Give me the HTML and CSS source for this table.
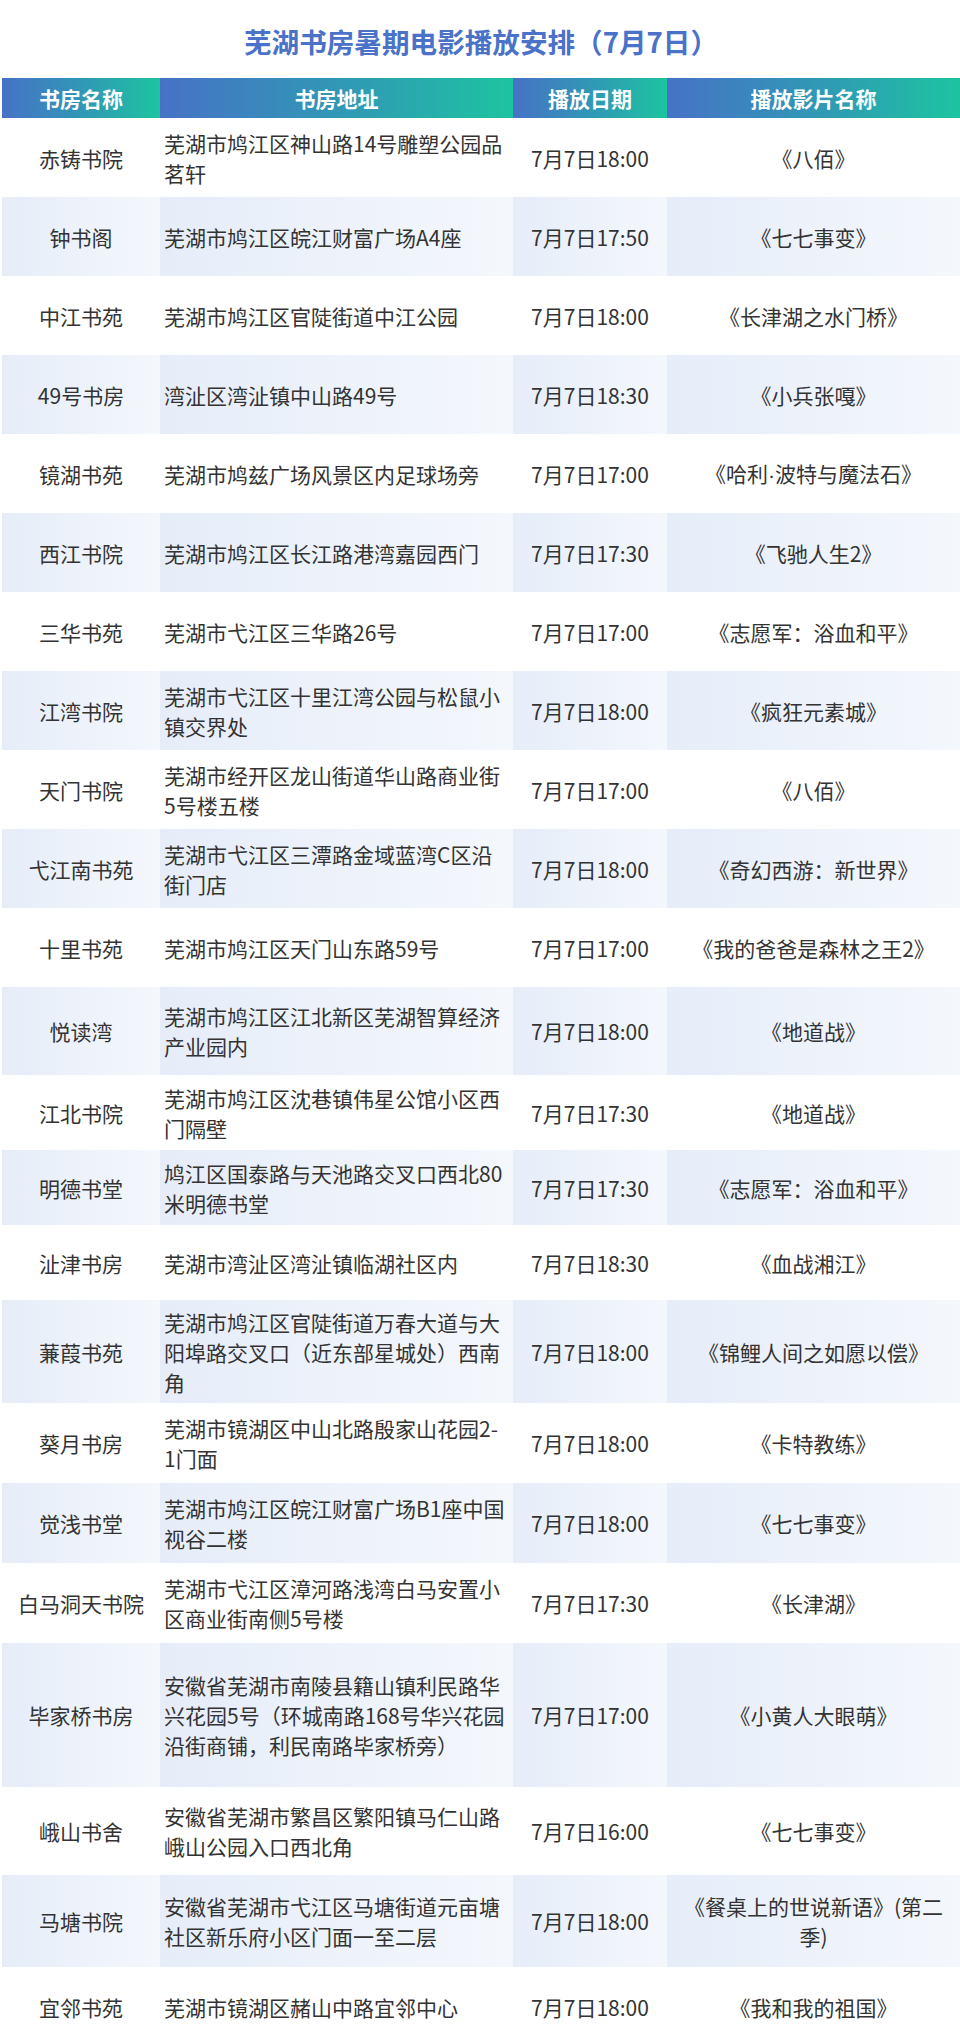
FILE: index.html
```html
<!DOCTYPE html>
<html lang="zh-CN">
<head>
<meta charset="utf-8">
<title>芜湖书房暑期电影播放安排</title>
<link rel="stylesheet" href="styles.css">
</head>
<body>
<div class="page">
  <h1 class="title">芜湖书房暑期电影播放安排（7月7日）</h1>
  <table class="schedule">
    <colgroup>
      <col class="c-name"><col class="c-addr"><col class="c-date"><col class="c-film">
    </colgroup>
    <thead>
      <tr><th>书房名称</th><th>书房地址</th><th>播放日期</th><th>播放影片名称</th></tr>
    </thead>
    <tbody>
      <tr><td>赤铸书院</td><td class="addr">芜湖市鸠江区神山路14号雕塑公园品<br>茗轩</td><td>7月7日18:00</td><td>《八佰》</td></tr>
      <tr><td>钟书阁</td><td class="addr">芜湖市鸠江区皖江财富广场A4座</td><td>7月7日17:50</td><td>《七七事变》</td></tr>
      <tr><td>中江书苑</td><td class="addr">芜湖市鸠江区官陡街道中江公园</td><td>7月7日18:00</td><td>《长津湖之水门桥》</td></tr>
      <tr><td>49号书房</td><td class="addr">湾沚区湾沚镇中山路49号</td><td>7月7日18:30</td><td>《小兵张嘎》</td></tr>
      <tr><td>镜湖书苑</td><td class="addr">芜湖市鸠兹广场风景区内足球场旁</td><td>7月7日17:00</td><td>《哈利<span class="dot">·</span>波特与魔法石》</td></tr>
      <tr><td>西江书院</td><td class="addr">芜湖市鸠江区长江路港湾嘉园西门</td><td>7月7日17:30</td><td>《飞驰人生2》</td></tr>
      <tr><td>三华书苑</td><td class="addr">芜湖市弋江区三华路26号</td><td>7月7日17:00</td><td>《志愿军：浴血和平》</td></tr>
      <tr><td>江湾书院</td><td class="addr">芜湖市弋江区十里江湾公园与松鼠小<br>镇交界处</td><td>7月7日18:00</td><td>《疯狂元素城》</td></tr>
      <tr><td>天门书院</td><td class="addr">芜湖市经开区龙山街道华山路商业街<br>5号楼五楼</td><td>7月7日17:00</td><td>《八佰》</td></tr>
      <tr><td>弋江南书苑</td><td class="addr">芜湖市弋江区三潭路金域蓝湾C区沿<br>街门店</td><td>7月7日18:00</td><td>《奇幻西游：新世界》</td></tr>
      <tr><td>十里书苑</td><td class="addr">芜湖市鸠江区天门山东路59号</td><td>7月7日17:00</td><td>《我的爸爸是森林之王2》</td></tr>
      <tr class="h88"><td>悦读湾</td><td class="addr">芜湖市鸠江区江北新区芜湖智算经济<br>产业园内</td><td>7月7日18:00</td><td>《地道战》</td></tr>
      <tr class="h75"><td>江北书院</td><td class="addr">芜湖市鸠江区沈巷镇伟星公馆小区西<br>门隔壁</td><td>7月7日17:30</td><td>《地道战》</td></tr>
      <tr class="h75"><td>明德书堂</td><td class="addr">鸠江区国泰路与天池路交叉口西北80<br>米明德书堂</td><td>7月7日17:30</td><td>《志愿军：浴血和平》</td></tr>
      <tr class="h75"><td>沚津书房</td><td class="addr">芜湖市湾沚区湾沚镇临湖社区内</td><td>7月7日18:30</td><td>《血战湘江》</td></tr>
      <tr class="h103"><td>蒹葭书苑</td><td class="addr">芜湖市鸠江区官陡街道万春大道与大<br>阳埠路交叉口（近东部星城处）西南<br>角</td><td>7月7日18:00</td><td>《锦鲤人间之如愿以偿》</td></tr>
      <tr class="h80"><td>葵月书房</td><td class="addr">芜湖市镜湖区中山北路殷家山花园2-<br>1门面</td><td>7月7日18:00</td><td>《卡特教练》</td></tr>
      <tr class="h80"><td>觉浅书堂</td><td class="addr">芜湖市鸠江区皖江财富广场B1座中国<br>视谷二楼</td><td>7月7日18:00</td><td>《七七事变》</td></tr>
      <tr class="h80"><td>白马洞天书院</td><td class="addr">芜湖市弋江区漳河路浅湾白马安置小<br>区商业街南侧5号楼</td><td>7月7日17:30</td><td>《长津湖》</td></tr>
      <tr class="h144"><td>毕家桥书房</td><td class="addr">安徽省芜湖市南陵县籍山镇利民路华<br>兴花园5号（环城南路168号华兴花园<br>沿街商铺，利民南路毕家桥旁）</td><td>7月7日17:00</td><td>《小黄人大眼萌》</td></tr>
      <tr class="h88"><td>峨山书舍</td><td class="addr">安徽省芜湖市繁昌区繁阳镇马仁山路<br>峨山公园入口西北角</td><td>7月7日16:00</td><td>《七七事变》</td></tr>
      <tr class="h92"><td>马塘书院</td><td class="addr">安徽省芜湖市弋江区马塘街道元亩塘<br>社区新乐府小区门面一至二层</td><td>7月7日18:00</td><td>《餐桌上的世说新语》(第二<br>季)</td></tr>
      <tr><td>宜邻书苑</td><td class="addr">芜湖市镜湖区赭山中路宜邻中心</td><td>7月7日18:00</td><td>《我和我的祖国》</td></tr>
    </tbody>
  </table>
</div>
</body>
</html>
```

FILE: styles.css
```css
* {
  box-sizing: border-box;
}

body {
  margin: 0;
  background: #ffffff;
  font-family: "Noto Sans CJK SC", "Noto Sans", sans-serif;
  color: #333333;
}

.page {
  width: 960px;
  padding-left: 2px;
}

.title {
  margin: 0;
  height: 78px;
  padding-top: 4px;
  display: flex;
  align-items: center;
  justify-content: center;
  font-size: 27.6px;
  font-weight: 700;
  color: #4a72c8;
}

.schedule {
  width: 958px;
  border-collapse: collapse;
  table-layout: fixed;
}

.c-name { width: 158px; }
.c-addr { width: 353px; }
.c-date { width: 154px; }
.c-film { width: 293px; }

.schedule th {
  height: 40px;
  padding: 0;
  font-size: 21px;
  font-weight: 700;
  color: #ffffff;
  text-align: center;
  background: linear-gradient(90deg, #4672c6 0%, #2f9bb4 55%, #1dc4a0 100%);
}

.schedule td {
  height: 79px;
  padding: 0 4px;
  font-size: 21px;
  line-height: 30px;
  text-align: center;
  vertical-align: middle;
  white-space: nowrap;
}

.schedule td.addr {
  text-align: left;
}

.dot {
  font-family: "Liberation Sans", sans-serif;
}

.schedule tbody tr:nth-child(even) td {
  background: linear-gradient(90deg, #e6edf9, #f4f7fc);
}

.schedule tr.h75 td { height: 75px; }
.schedule tr.h80 td { height: 80px; }
.schedule tr.h88 td { height: 88px; }
.schedule tr.h92 td { height: 92px; }
.schedule tr.h103 td { height: 103px; }
.schedule tr.h144 td { height: 144px; }
```
